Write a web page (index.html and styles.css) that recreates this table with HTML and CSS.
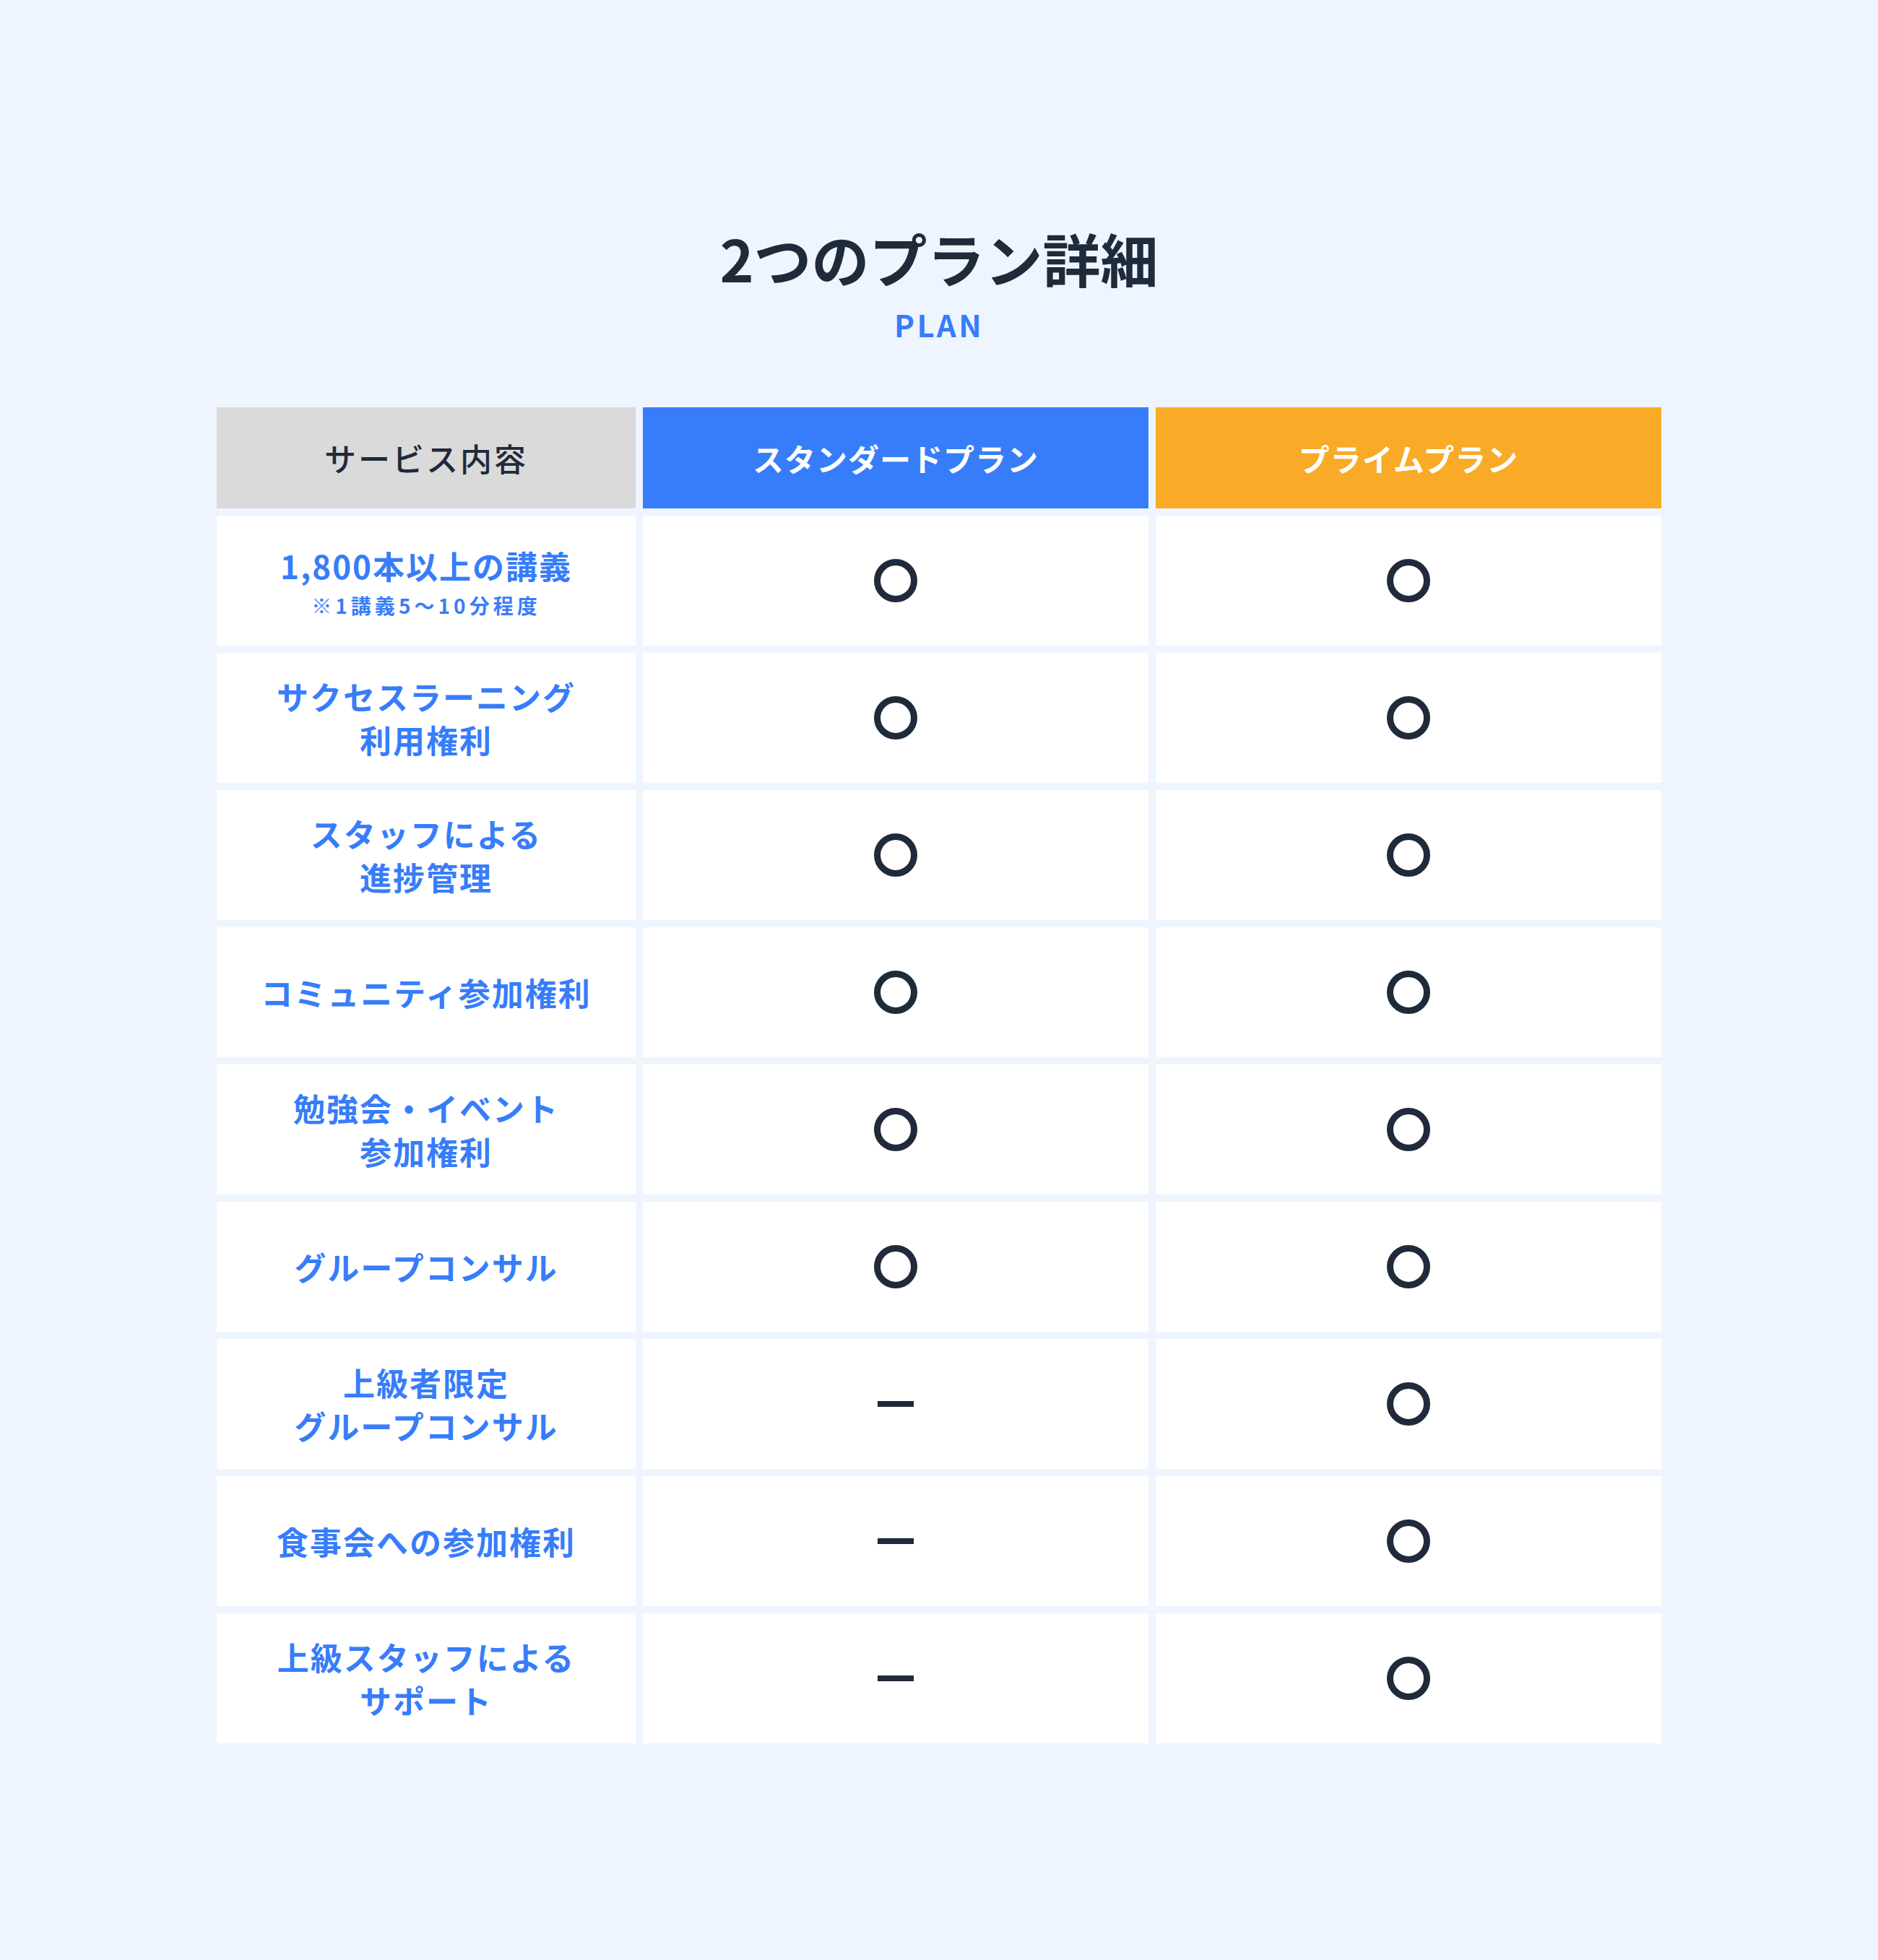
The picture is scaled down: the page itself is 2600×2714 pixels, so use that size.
FILE: index.html
```html
<!DOCTYPE html>
<html lang="ja">
<head>
<meta charset="utf-8">
<title>2つのプラン詳細</title>
<link rel="stylesheet" href="styles.css">
</head>
<body>
<main class="page">
  <header class="heading">
    <h1 class="title">2つのプラン詳細</h1>
    <p class="subtitle">PLAN</p>
  </header>
  <div class="table">
    <div class="cell head head-service">サービス内容</div>
    <div class="cell head head-standard">スタンダードプラン</div>
    <div class="cell head head-prime">プライムプラン</div>

    <div class="cell label label-note"><span>1,800本以上の講義</span><span class="note">※1講義5〜10分程度</span></div>
    <div class="cell"><span class="circle"></span></div>
    <div class="cell"><span class="circle"></span></div>

    <div class="cell label"><span>サクセスラーニング<br>利用権利</span></div>
    <div class="cell"><span class="circle"></span></div>
    <div class="cell"><span class="circle"></span></div>

    <div class="cell label"><span>スタッフによる<br>進捗管理</span></div>
    <div class="cell"><span class="circle"></span></div>
    <div class="cell"><span class="circle"></span></div>

    <div class="cell label"><span>コミュニティ参加権利</span></div>
    <div class="cell"><span class="circle"></span></div>
    <div class="cell"><span class="circle"></span></div>

    <div class="cell label"><span>勉強会・イベント<br>参加権利</span></div>
    <div class="cell"><span class="circle"></span></div>
    <div class="cell"><span class="circle"></span></div>

    <div class="cell label"><span>グループコンサル</span></div>
    <div class="cell"><span class="circle"></span></div>
    <div class="cell"><span class="circle"></span></div>

    <div class="cell label"><span>上級者限定<br>グループコンサル</span></div>
    <div class="cell"><span class="dash"></span></div>
    <div class="cell"><span class="circle"></span></div>

    <div class="cell label"><span>食事会への参加権利</span></div>
    <div class="cell"><span class="dash"></span></div>
    <div class="cell"><span class="circle"></span></div>

    <div class="cell label"><span>上級スタッフによる<br>サポート</span></div>
    <div class="cell"><span class="dash"></span></div>
    <div class="cell"><span class="circle"></span></div>
  </div>
</main>
</body>
</html>
```
FILE: styles.css
```css
html, body {
  margin: 0;
  padding: 0;
}
body {
  background: #eef5ff;
  font-family: "Noto Sans CJK JP", "Noto Sans", sans-serif;
  color: #1f2a3a;
}
.page {
  width: 2600px;
  min-height: 2714px;
  box-sizing: border-box;
  padding-top: 308px;
  padding-bottom: 300px;
}
.heading {
  text-align: center;
}
.title {
  margin: 0;
  font-size: 80px;
  line-height: 96px;
  font-weight: 700;
  color: #1f2a3a;
}
.subtitle {
  margin: 21px 0 0;
  font-size: 42px;
  line-height: 48px;
  font-weight: 700;
  letter-spacing: 0.08em;
  color: #377dfa;
}
.table {
  width: 2000px;
  margin: 91px auto 0;
  display: grid;
  grid-template-columns: 580px 700px 700px;
  grid-template-rows: 140px;
  grid-auto-rows: 180px;
  gap: 10px;
}
.cell {
  background: #ffffff;
  display: flex;
  align-items: center;
  justify-content: center;
  text-align: center;
}
.head {
  font-size: 43px;
  font-weight: 700;
  color: #ffffff;
  letter-spacing: 1px;
}
.head-service {
  background: #dadada;
  color: #1f2a3a;
  font-weight: 500;
  font-size: 44px;
  letter-spacing: 3px;
}
.head-standard {
  background: #377dfa;
}
.head-prime {
  background: #f9aa26;
}
.label {
  flex-direction: column;
  font-size: 44px;
  line-height: 60px;
  font-weight: 700;
  letter-spacing: 2px;
  color: #377dfa;
}
.label-note {
  padding-top: 2px;
  box-sizing: border-box;
}
.note {
  margin-top: 5px;
  font-size: 28px;
  line-height: 40px;
  letter-spacing: 0.18em;
}
.circle {
  width: 60px;
  height: 60px;
  box-sizing: border-box;
  border: 9px solid #1f2a3a;
  border-radius: 50%;
}
.dash {
  width: 50px;
  height: 8px;
  background: #1f2a3a;
}
```
